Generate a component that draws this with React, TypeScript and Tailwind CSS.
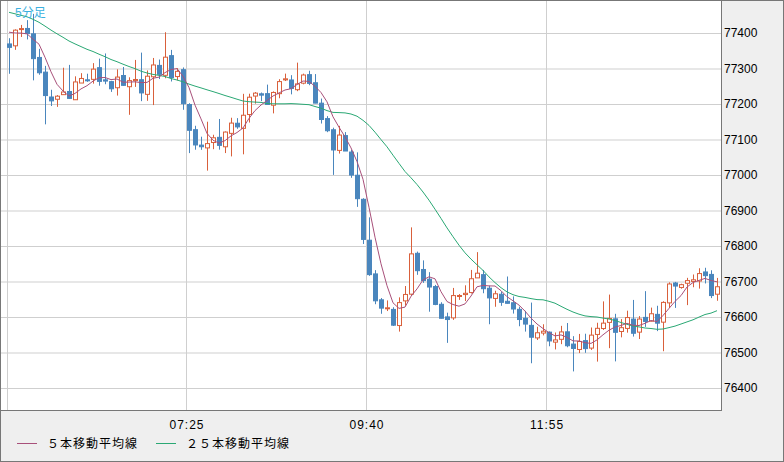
import React from 'react'

// keypoints: x pixel -> close price
const KEYS: [number, number][] = [
  [8, 77380], [20, 77410], [28, 77400], [35, 77300], [45, 77200], [60, 77230], [75, 77260], [90, 77280],
  [105, 77270], [120, 77240], [135, 77250], [150, 77280], [165, 77320], [180, 77250], [192, 77080],
  [210, 77100], [230, 77120], [245, 77200], [270, 77230], [290, 77270], [305, 77250], [315, 77200],
  [330, 77100], [345, 77080], [358, 76900], [365, 76750], [380, 76600], [395, 76600], [410, 76750],
  [425, 76700], [440, 76600], [460, 76680], [480, 76700], [500, 76650], [520, 76580], [535, 76560],
  [555, 76550], [570, 76500], [590, 76530], [600, 76600], [620, 76580], [640, 76570], [660, 76620],
  [670, 76680], [690, 76700], [710, 76690], [718, 76660],
]

const N = 119
const px = (i: number) => 8 + i * 6
const py = (p: number) => 32 + (77400 - p) * 0.355

function interp(x: number) {
  for (let k = 1; k < KEYS.length; k++) {
    const [x0, p0] = KEYS[k - 1]
    const [x1, p1] = KEYS[k]
    if (x <= x1) return p0 + ((p1 - p0) * (x - x0)) / (x1 - x0)
  }
  return KEYS[KEYS.length - 1][1]
}

const rnd = (n: number) => {
  const v = Math.sin(n * 12.9898 + 78.233) * 43758.5453
  return v - Math.floor(v)
}

type Candle = { o: number; h: number; l: number; c: number }

const candles: Candle[] = []
let prev = 77370
for (let i = 0; i < N; i++) {
  const base = interp(px(i))
  const c = base + (rnd(i) - 0.5) * 60
  const o = prev + (rnd(i + 300) - 0.5) * 10
  const h = Math.max(o, c) + rnd(i + 100) * 25 + (rnd(i + 500) > 0.85 ? 50 : 0)
  const l = Math.min(o, c) - rnd(i + 200) * 25 - (rnd(i + 600) > 0.85 ? 60 : 0)
  candles.push({ o, h, l, c })
  prev = c
}

const closes = [...Array.from({ length: 24 }, (_, k) => 77520 - k * 5), ...candles.map(c => c.c)]
const ma = (n: number) =>
  candles.map((_, i) => {
    const end = i + 24
    let s = 0
    for (let k = end - n + 1; k <= end; k++) s += closes[k]
    return s / n
  })
const ma5 = ma(5)
const ma25 = ma(25)
const line = (arr: number[]) => arr.map((v, i) => `${px(i)},${py(v).toFixed(1)}`).join(' ')

const TICKS = [77400, 77300, 77200, 77100, 77000, 76900, 76800, 76700, 76600, 76500, 76400]
const VLINES = [6, 185, 365, 545]
const TIMES: [number, string][] = [[186, '07:25'], [366, '09:40'], [546, '11:55']]

export default function App() {
  return (
    <div className="w-[784px] h-[462px] border border-[#777] bg-[#efefef] flex flex-col text-[12px] text-black" style={{ fontFamily: '"Liberation Sans", "Noto Sans CJK JP", sans-serif' }}>
      <div className="flex">
        <div className="relative w-[721px] h-[410px] bg-white border-r border-b border-[#777]">
          <svg width="720" height="409" className="block">
            {TICKS.map(t => (
              <line key={t} x1="0" x2="720" y1={py(t) + 0.5} y2={py(t) + 0.5} stroke="#cfcfcf" />
            ))}
            {VLINES.map(x => (
              <line key={x} x1={x + 0.5} x2={x + 0.5} y1="0" y2="409" stroke="#cfcfcf" />
            ))}
            {candles.map((k, i) => {
              const up = k.c >= k.o
              const col = up ? '#d9603b' : '#4a86bd'
              const x = px(i)
              const top = py(Math.max(k.o, k.c))
              const bot = py(Math.min(k.o, k.c))
              return (
                <g key={i}>
                  <line x1={x + 0.5} x2={x + 0.5} y1={py(k.h)} y2={py(k.l)} stroke={col} />
                  <rect x={x - 1.5} y={top + 0.5} width="4" height={Math.max(1, bot - top)} fill={up ? '#fff' : col} stroke={col} />
                </g>
              )
            })}
            <polyline points={line(ma25)} fill="none" stroke="#2aa874" strokeWidth="1" />
            <polyline points={line(ma5)} fill="none" stroke="#a8507a" strokeWidth="1" />
          </svg>
          <span className="absolute left-[14px] top-[3px] text-[#3bb0e0]">5分足</span>
        </div>
        <div className="relative flex-1">
          {TICKS.map(t => (
            <span key={t} className="absolute left-[2px] leading-none" style={{ top: py(t) - 6 }}>{t}</span>
          ))}
        </div>
      </div>
      <div className="relative h-[22px]">
        {TIMES.map(([x, s]) => (
          <span key={s} className="absolute top-[5px] -translate-x-1/2 tracking-[1px]" style={{ left: x }}>{s}</span>
        ))}
      </div>
      <div className="flex items-center gap-[10px] pl-[16px] pt-[1px] tracking-[1px]" style={{ fontFamily: '"Noto Sans CJK JP", sans-serif' }}>
        <span className="w-[20px] h-px bg-[#a8507a]" />
        <span className="mr-[8px]">５本移動平均線</span>
        <span className="w-[20px] h-px bg-[#2aa874]" />
        <span>２５本移動平均線</span>
      </div>
    </div>
  )
}
